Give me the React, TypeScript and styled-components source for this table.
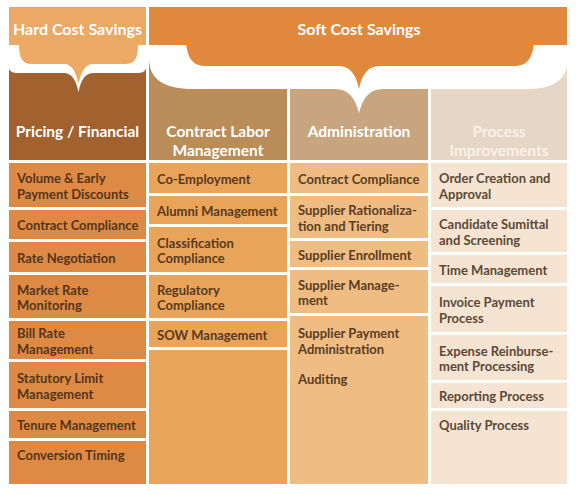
import styled, { createGlobalStyle } from 'styled-components';

const GlobalStyle = createGlobalStyle`
  html, body {
    margin: 0;
    background: #ffffff;
  }
  body {
    font-family: Lato, 'Open Sans', sans-serif;
  }
`;

const HARD = '#eba963';
const SOFT = '#e0893c';

interface Cell {
  h?: number;
  pad?: number;
  items: string[][];
}

interface Column {
  title: string[];
  headBg: string;
  headInk: string;
  cellBg: string;
  ink: string;
  cells: Cell[];
}

const COLUMNS: Column[] = [
  {
    title: ['Pricing / Financial'],
    headBg: '#a1622f',
    headInk: '#ffffff',
    cellBg: '#de8a45',
    ink: '#543519',
    cells: [
      { h: 44, items: [['Volume & Early', 'Payment Discounts']] },
      { h: 29, items: [['Contract Compliance']] },
      { h: 30, items: [['Rate Negotiation']] },
      { h: 43, items: [['Market Rate', 'Monitoring']] },
      { h: 38, items: [['Bill Rate', 'Management']] },
      { h: 46, items: [['Statutory Limit', 'Management']] },
      { h: 27, items: [['Tenure Management']] },
      { items: [['Conversion Timing']] },
    ],
  },
  {
    title: ['Contract Labor', 'Management'],
    headBg: '#ba8c58',
    headInk: '#ffffff',
    cellBg: '#eaa45a',
    ink: '#573a1e',
    cells: [
      { h: 30, items: [['Co-Employment']] },
      { h: 28, items: [['Alumni Management']] },
      { h: 45, items: [['Classification', 'Compliance']] },
      { h: 43, items: [['Regulatory', 'Compliance']] },
      { h: 26, items: [['SOW Management']] },
      { items: [] },
    ],
  },
  {
    title: ['Administration'],
    headBg: '#c9a57f',
    headInk: '#ffffff',
    cellBg: '#efbc84',
    ink: '#5a3d22',
    cells: [
      { h: 30, items: [['Contract Compliance']] },
      { h: 42, items: [['Supplier Rationaliza-', 'tion and Tiering']] },
      { h: 26, items: [['Supplier Enrollment']] },
      { h: 43, items: [['Supplier Manage-', 'ment']] },
      { pad: 10, items: [['Supplier Payment', 'Administration'], ['Auditing']] },
    ],
  },
  {
    title: ['Process', 'Improvements'],
    headBg: '#e5d6c5',
    headInk: '#f8f1e9',
    cellBg: '#f5e4d2',
    ink: '#5c4937',
    cells: [
      { h: 44, items: [['Order Creation and', 'Approval']] },
      { h: 42, items: [['Candidate Sumittal', 'and Screening']] },
      { h: 28, items: [['Time Management']] },
      { h: 46, items: [['Invoice Payment', 'Process']] },
      { h: 45, items: [['Expense Reinburse-', 'ment Processing']] },
      { h: 25, items: [['Reporting Process']] },
      { items: [['Quality Process']] },
    ],
  },
];

const Page = styled.div`
  padding: 7px 0 0 9px;
`;

const Chart = styled.div`
  position: relative;
  display: grid;
  grid-template-columns: 137px 138px 138px 136px;
  grid-template-rows: 38px 115px 324px;
  column-gap: 3px;
  row-gap: 0;
  width: 558px;
`;

const Banner = styled.div<{ $bg: string }>`
  background: ${({ $bg }) => $bg};
  color: #ffffff;
  font-size: 16px;
  font-weight: 700;
  line-height: 18px;
  padding-top: 13px;
  box-sizing: border-box;
  text-align: center;
`;

const HardBanner = styled(Banner)`
  grid-column: 1;
`;

const SoftBanner = styled(Banner)`
  grid-column: 2 / 5;
  display: grid;
  grid-template-columns: 138px 138px 136px;
  column-gap: 3px;
`;

const SoftLabel = styled.span`
  grid-column: 2;
`;

const ColumnHead = styled.div<{ $bg: string; $ink: string }>`
  background: ${({ $bg }) => $bg};
  color: ${({ $ink }) => $ink};
  font-size: 15.5px;
  font-weight: 700;
  line-height: 18.6px;
  text-align: center;
  padding-top: 77px;
  box-sizing: border-box;
`;

const Stack = styled.div`
  display: flex;
  flex-direction: column;
  gap: 3px;
  margin-top: 3px;
`;

const Box = styled.div<{ $bg: string; $ink: string; $h?: number; $pad?: number }>`
  display: flex;
  flex-direction: column;
  gap: 15px;
  background: ${({ $bg }) => $bg};
  color: ${({ $ink }) => $ink};
  font-size: 13px;
  font-weight: 700;
  line-height: 15.5px;
  padding: 0 4px 0 8px;
  box-sizing: border-box;
  ${({ $h, $pad }) =>
    $h
      ? `height: ${$h}px; justify-content: center; padding-top: 3px;`
      : `flex: 1; justify-content: flex-start; padding-top: ${$pad ?? 7}px;`}
`;

const Line = styled.span`
  display: block;
  white-space: nowrap;
`;

const Braces = styled.svg`
  position: absolute;
  top: 38px;
  left: 0;
  width: 558px;
  height: 75px;
  pointer-events: none;
`;

const BraceArt = () => (
  <Braces viewBox="9 45 558 75">
    {/* hard cost brace */}
    <path
      d="M 8 44 H 147 V 64 Q 147 73 138 73 H 94 C 85 73 81 80 78.5 92 C 76 80 72 73 63 73 H 17 Q 8 73 8 64 Z"
      fill="#ffffff"
    />
    <path
      d="M 19 44 C 19 58 22 64 32 64 H 64 C 72 64 76 72 78.5 84 C 81 72 85 64 93 64 H 125 C 135 64 138 58 138 44 Z"
      fill={HARD}
    />
    {/* soft cost brace */}
    <path
      d="M 149 44 H 568 V 58 C 568 80 553 89 528 89 H 383 C 370 89 363 97 359 113 C 355 97 348 89 335 89 H 193 C 165 89 149 80 149 58 Z"
      fill="#ffffff"
    />
    <path
      d="M 186 44 C 188 59 193 66 206 66 H 338 C 350 66 356 74 359 89 C 362 74 368 66 380 66 H 514 C 527 66 532 59 534 44 Z"
      fill={SOFT}
    />
  </Braces>
);

const App = () => (
  <Page>
    <GlobalStyle />
    <Chart>
      <HardBanner $bg={HARD}>Hard Cost Savings</HardBanner>
      <SoftBanner $bg={SOFT}>
        <SoftLabel>Soft Cost Savings</SoftLabel>
      </SoftBanner>
      {COLUMNS.map((col) => (
        <ColumnHead key={col.title.join()} $bg={col.headBg} $ink={col.headInk}>
          {col.title.map((t) => (
            <Line key={t}>{t}</Line>
          ))}
        </ColumnHead>
      ))}
      {COLUMNS.map((col) => (
        <Stack key={col.title.join()}>
          {col.cells.map((cell, i) => (
            <Box key={i} $bg={col.cellBg} $ink={col.ink} $h={cell.h} $pad={cell.pad}>
              {cell.items.map((item) => (
                <div key={item.join()}>
                  {item.map((l) => (
                    <Line key={l}>{l}</Line>
                  ))}
                </div>
              ))}
            </Box>
          ))}
        </Stack>
      ))}
      <BraceArt />
    </Chart>
  </Page>
);

export default App;
